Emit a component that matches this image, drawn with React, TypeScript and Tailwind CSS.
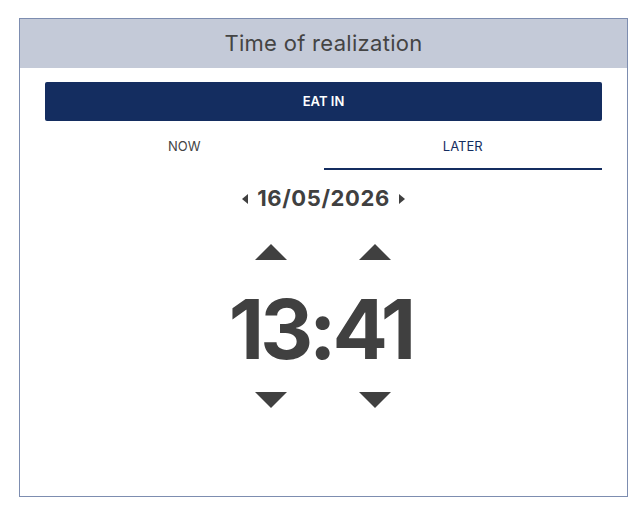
import { useState } from "react";

function Tri({ dir, className }: { dir: "up" | "down" | "left" | "right"; className?: string }) {
  const pts = {
    up: "0,16 16,0 32,16",
    down: "0,0 32,0 16,16",
    left: "6,0 6,10 0,5",
    right: "0,0 0,10 6,5",
  }[dir];
  const vb = dir === "up" || dir === "down" ? "0 0 32 16" : "0 0 6 10";
  return (
    <svg viewBox={vb} className={className} fill="#404040">
      <polygon points={pts} />
    </svg>
  );
}

export default function App() {
  const [tab, setTab] = useState<"now" | "later">("later");

  return (
    <div className="w-[641px] h-[511px] bg-white pt-[18px] pl-[19px]" style={{ fontFamily: "Inter, 'Open Sans', sans-serif" }}>
      <div className="w-[609px] h-[479px] border border-[#7d8db0] flex flex-col">
        {/* Header */}
        <div className="h-[49px] bg-[#c4cad8] flex items-center justify-center">
          <span className="text-[22px] text-[#444] tracking-[0.3px]">Time of realization</span>
        </div>

        <div className="px-[25px] pt-[14px]">
          <button className="w-full h-[39px] rounded-[2px] bg-[#142d60] text-white text-[13px] font-semibold">
            EAT IN
          </button>

          {/* Tabs */}
          <div className="flex mt-[1px]">
            <button
              onClick={() => setTab("now")}
              className={`flex-1 h-[48px] pt-[3px] text-[13px] ${tab === "now" ? "text-[#142d60] border-b-2 border-[#142d60]" : "text-[#444] border-b-2 border-transparent"}`}
            >
              NOW
            </button>
            <button
              onClick={() => setTab("later")}
              className={`flex-1 h-[48px] pt-[3px] text-[13px] ${tab === "later" ? "text-[#142d60] border-b-2 border-[#142d60]" : "text-[#444] border-b-2 border-transparent"}`}
            >
              LATER
            </button>
          </div>

          {/* Date */}
          <div className="flex items-center justify-center gap-[9px] mt-[12px]">
            <Tri dir="left" className="w-[6px] h-[10px]" />
            <span className="text-[22px] font-bold text-[#404040] tracking-[0.6px]">16/05/2026</span>
            <Tri dir="right" className="w-[6px] h-[10px]" />
          </div>

          {/* Time */}
          <div className="flex flex-col items-center mt-[29px]">
            <div className="flex gap-[72px] -ml-[1px]">
              <Tri dir="up" className="w-[32px] h-[16px]" />
              <Tri dir="up" className="w-[32px] h-[16px]" />
            </div>
            <div className="text-[82px] leading-none font-bold text-[#404040] tracking-[-4px] mt-[29px] -ml-[6px]">13:41</div>
            <div className="flex gap-[72px] mt-[21px] -ml-[1px]">
              <Tri dir="down" className="w-[32px] h-[16px]" />
              <Tri dir="down" className="w-[32px] h-[16px]" />
            </div>
          </div>
        </div>
      </div>
    </div>
  );
}
